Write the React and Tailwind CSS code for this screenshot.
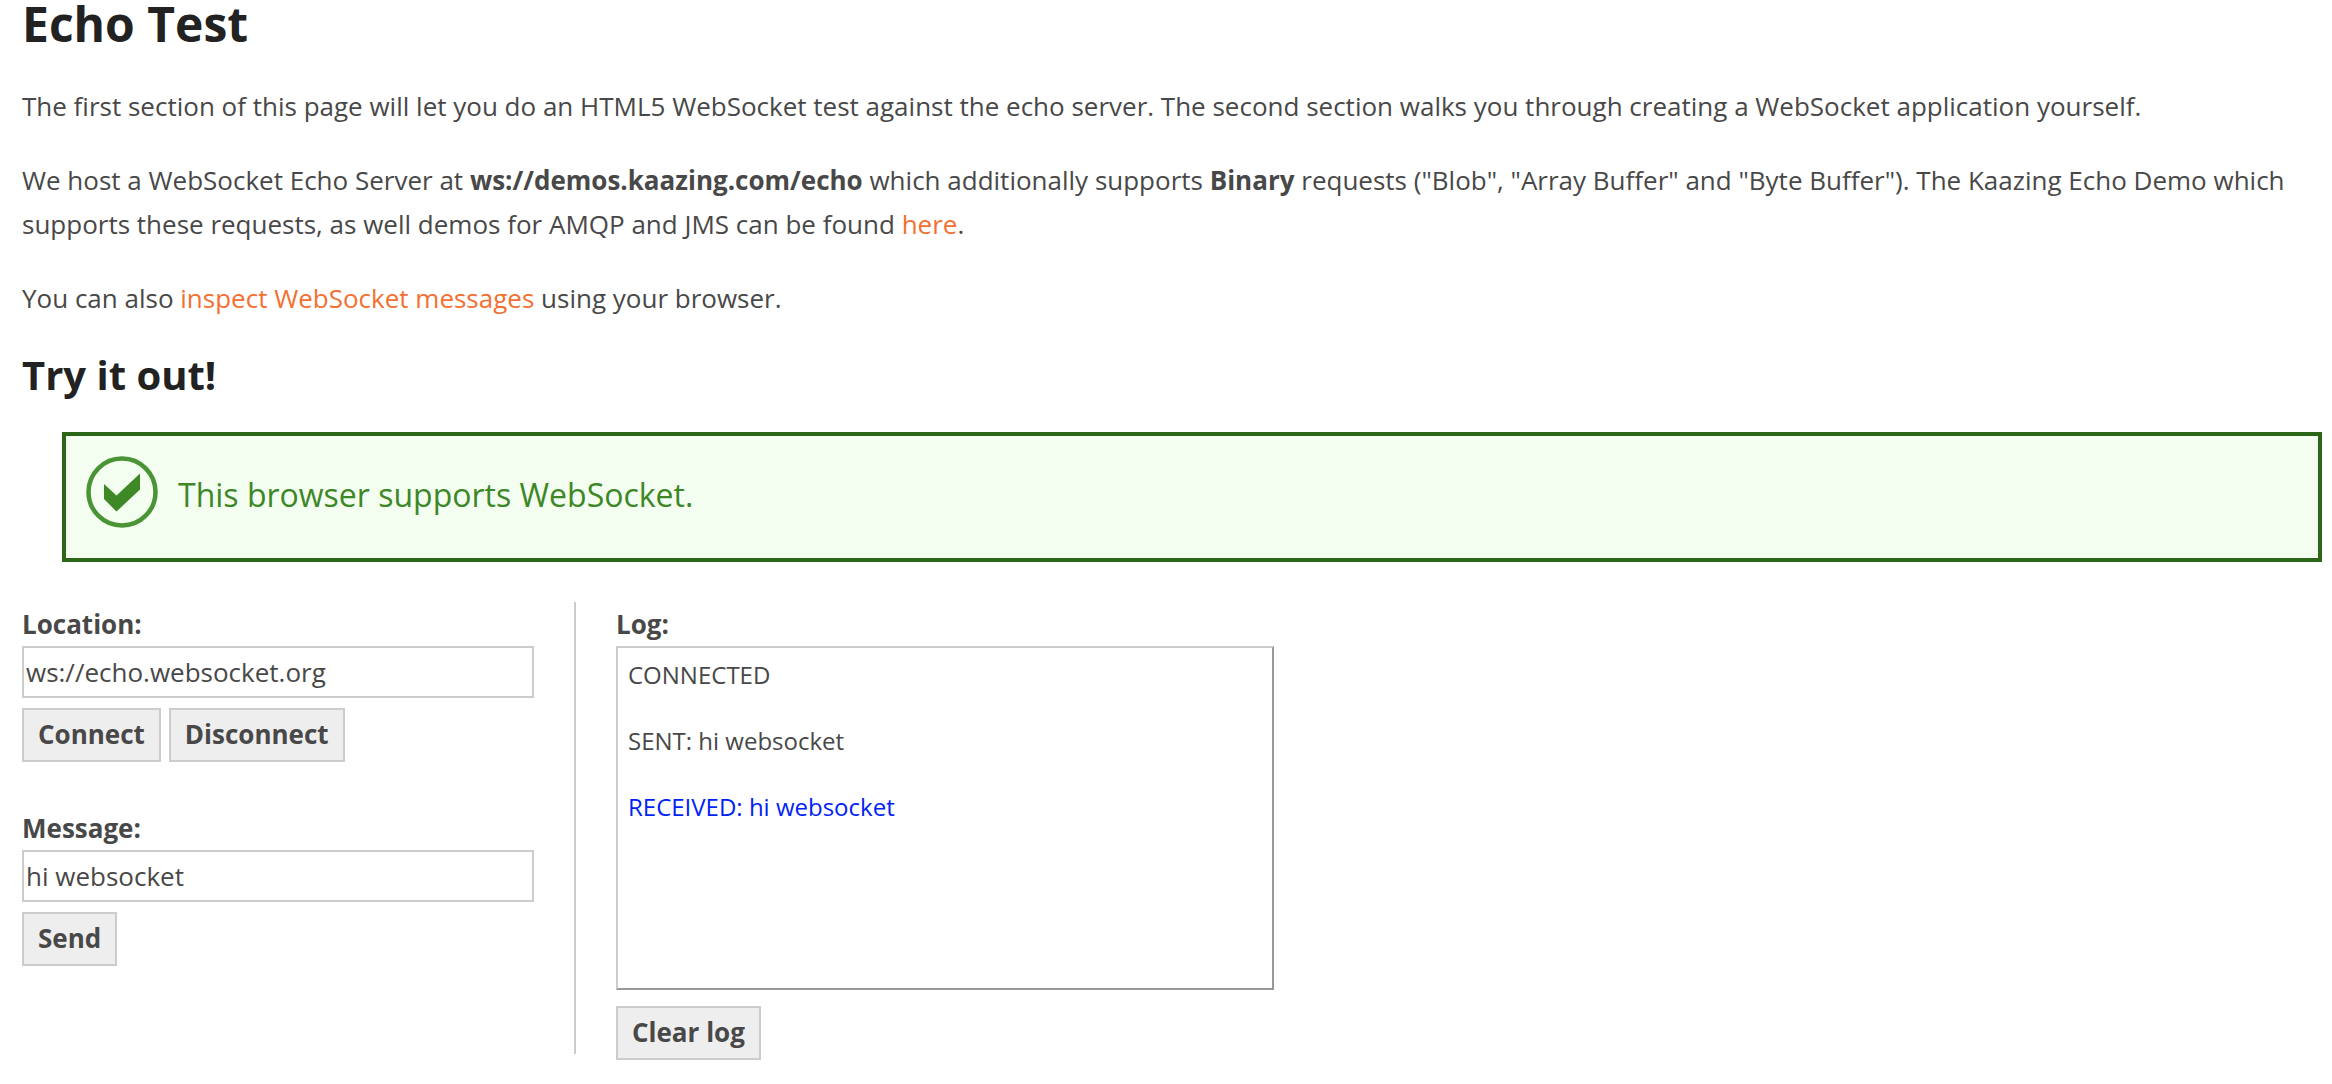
import { useState } from "react";

const button =
  "cursor-pointer border-2 border-[#ccc] bg-[#eee] px-3.5 pb-0.5 text-[26px] leading-[48px] font-bold";
const input =
  "h-[52px] w-full border-2 border-[#ccc] bg-white px-0.5 text-[26px] outline-none";
const link = "text-[#f37032] hover:underline";

function CheckBadge() {
  return (
    <svg viewBox="0 0 72 72" className="size-[72px] shrink-0" aria-hidden="true">
      <circle cx="36" cy="36" r="33.5" fill="none" stroke="#4a9436" strokeWidth="4.5" />
      <path d="M18 28 30.5 39.5 54 17.5V33.5L30.5 55.5 18 43Z" fill="#3f8826" />
    </svg>
  );
}

export default function App() {
  const [location, setLocation] = useState("ws://echo.websocket.org");
  const [message, setMessage] = useState("hi websocket");
  const [log, setLog] = useState([
    { text: "CONNECTED" },
    { text: "SENT: hi websocket" },
    { text: "RECEIVED: hi websocket", received: true },
  ]);
  const add = (text) => setLog((entries) => [...entries, { text }]);

  return (
    <main className="bg-white pr-2.5 pl-[22px] font-['Open_Sans',sans-serif] text-[26px] leading-[44px] text-[#484848]">
      <h1 className="mb-9 text-5xl leading-[48px] font-bold text-[#222]">Echo Test</h1>
      <div className="flex flex-col gap-[30px]">
        <p>
          The first section of this page will let you do an HTML5 WebSocket test against the echo
          server. The second section walks you through creating a WebSocket application yourself.
        </p>
        <p>
          We host a WebSocket Echo Server at <strong>ws://demos.kaazing.com/echo</strong> which
          additionally supports <strong>Binary</strong> requests ("Blob", "Array Buffer" and "Byte
          Buffer"). The Kaazing Echo Demo which supports these requests, as well demos for AMQP and
          JMS can be found <a href="#here" className={link}>here</a>.
        </p>
        <p>
          You can also <a href="#inspect" className={link}>inspect WebSocket messages</a> using your
          browser.
        </p>
        <h2 className="text-[40px] leading-[50px] font-bold text-[#222]">Try it out!</h2>
      </div>

      <div
        role="status"
        className="mt-8 ml-10 flex items-start gap-5 border-4 border-[#2c6618] bg-[#f3fef1] px-5 pt-5 pb-6 text-[32px] leading-[78px] text-[#3d8726]"
      >
        <CheckBadge />
        <p>This browser supports WebSocket.</p>
      </div>

      <div className="mt-10 flex items-start">
        <form
          className="w-[554px] shrink-0 border-r-2 border-[#ccc] pr-10 pb-[88px]"
          onSubmit={(e) => {
            e.preventDefault();
            add("SENT: " + message);
          }}
        >
          <label htmlFor="location" className="block font-bold">Location:</label>
          <input id="location" className={input} value={location} onChange={(e) => setLocation(e.target.value)} />
          <div className="mt-2.5 flex gap-2">
            <button type="button" className={button} onClick={() => add("CONNECTED")}>Connect</button>
            <button type="button" className={button} onClick={() => add("DISCONNECTED")}>Disconnect</button>
          </div>
          <label htmlFor="message" className="mt-11 block font-bold">Message:</label>
          <input id="message" className={input} value={message} onChange={(e) => setMessage(e.target.value)} />
          <div className="mt-2.5 flex">
            <button type="submit" className={button}>Send</button>
          </div>
        </form>

        <section aria-labelledby="log-title" className="ml-10 flex w-[658px] flex-col items-start">
          <h3 id="log-title" className="font-bold">Log:</h3>
          <div
            role="log"
            className="flex h-[344px] w-full flex-col gap-6 overflow-y-auto border-2 border-t-[#ccc] border-r-[#999] border-b-[#999] border-l-[#ccc] px-2.5 py-1.5 text-2xl leading-[42px]"
          >
            {log.map((entry, i) => (
              <p key={i} className={entry.received ? "text-[#0022f5]" : ""}>{entry.text}</p>
            ))}
          </div>
          <button type="button" className={button + " mt-4"} onClick={() => setLog([])}>Clear log</button>
        </section>
      </div>
    </main>
  );
}
